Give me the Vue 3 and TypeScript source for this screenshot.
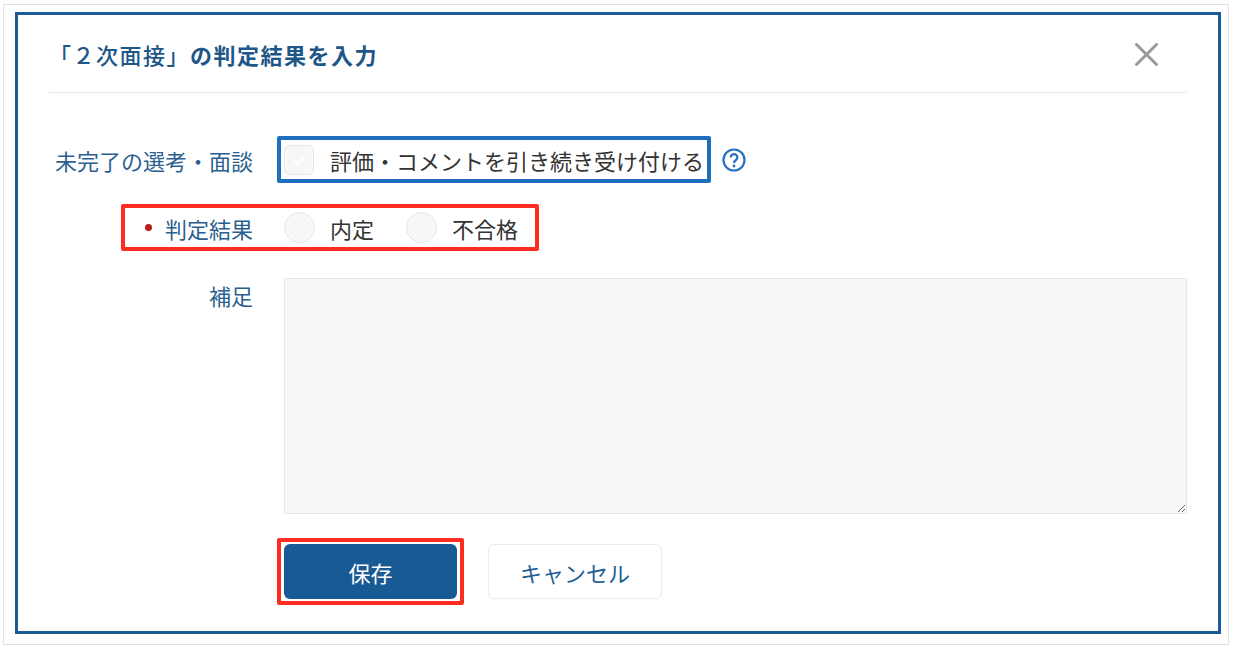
<script setup lang="ts">
const results: string[] = ['内定', '不合格']
</script>

<template>
  <div class="page">
    <div class="dialog">
      <header class="head">
        <h1 class="title"><span class="light">「２次面接」</span>の判定結果を入力</h1>
        <svg class="close" width="23" height="23" viewBox="0 0 23 23" aria-label="閉じる">
          <path d="M1.5 1.5 L21.5 21.5 M21.5 1.5 L1.5 21.5" stroke="#999" stroke-width="3" fill="none" stroke-linecap="round" />
        </svg>
      </header>

      <div class="form">
        <div class="row first">
          <div class="label">未完了の選考・面談</div>
          <div class="mark blue">
            <span class="box">
              <svg width="14" height="12" viewBox="0 0 14 12">
                <path d="M1.5 6.5 L5 10 L12.5 2" stroke="#fff" stroke-width="1.6" fill="none" />
              </svg>
            </span>
            <span class="text">評価・コメントを引き続き受け付ける</span>
          </div>
          <svg class="help" width="24" height="24" viewBox="0 0 24 24">
            <circle cx="12" cy="12" r="10.5" stroke="#2272bd" stroke-width="2.2" fill="none" />
            <path d="M8.6 9.4 a3.4 3.2 0 1 1 5.4 2.6 c-1.3 .9 -2 1.5 -2 3" stroke="#2272bd" stroke-width="2.2" fill="none" />
            <circle cx="12" cy="18" r="1.4" fill="#2272bd" />
          </svg>
        </div>

        <div class="row second">
          <div class="mark red result">
            <i class="dot"></i>
            <span class="label-inline">判定結果</span>
            <div class="radios">
              <label v-for="r in results" :key="r" class="radio-item">
                <span class="radio"></span>
                <span class="text">{{ r }}</span>
              </label>
            </div>
          </div>
        </div>

        <div class="row third">
          <div class="label note">補足</div>
          <textarea class="area"></textarea>
        </div>

        <div class="row actions">
          <div class="mark red save-mark">
            <button class="btn primary" type="button">保存</button>
          </div>
          <button class="btn ghost" type="button">キャンセル</button>
        </div>
      </div>
    </div>
  </div>
</template>

<style>
html, body { margin: 0; background: #fff; }
</style>

<style scoped>
.page {
  box-sizing: border-box;
  width: 1226px;
  height: 641px;
  margin: 4px 0 0 3px;
  padding: 7px 7px 10px 11px;
  border: 1px solid #e2e2e2;
  font-family: "Noto Sans CJK JP", "Noto Sans", sans-serif;
  font-size: 22px;
  color: #333;
}
.dialog {
  box-sizing: border-box;
  width: 1206px;
  height: 622px;
  border: 3px solid #1a5b95;
  padding: 0 31px;
  background: #fff;
}
.head {
  display: flex;
  align-items: center;
  justify-content: space-between;
  height: 77px;
  border-bottom: 1px solid #e6e6e6;
  padding-right: 29px;
}
.title {
  margin: 0;
  font-size: 22px;
  line-height: 30px;
  font-weight: 700;
  letter-spacing: 1.5px;
  color: #1d5687;
}
.light { font-weight: 500; }
.close { margin-top: 2px; }
.row { display: flex; }
.first { margin-top: 43px; align-items: center; height: 47px; }
.second { margin-top: 21px; }
.third { margin-top: 27px; }
.actions { margin-top: 24px; align-items: center; }
.label {
  width: 204px;
  text-align: right;
  color: #2a5f8f;
  line-height: 30px;
}
.mark {
  box-sizing: border-box;
  display: flex;
  align-items: center;
  height: 47px;
  padding: 0 3px;
  border-width: 4px;
  border-style: solid;
  border-radius: 2px;
}
.blue { border-color: #1f6fbf; margin-left: 24px; }
.red { border-color: #ff2d20; }
.box {
  box-sizing: border-box;
  display: flex;
  align-items: center;
  justify-content: center;
  width: 30px;
  height: 30px;
  border: 1px solid #e6e6e6;
  border-radius: 5px;
  background: #f7f7f7;
}
.text { margin-left: 16px; line-height: 30px; white-space: nowrap; }
.help { margin-left: 11px; }
.result { margin-left: 72px; padding: 0 17px 0 20px; }
.dot {
  width: 7px;
  height: 7px;
  border-radius: 50%;
  background: #b81c1c;
  margin-right: 13px;
}
.label-inline { color: #2a5f8f; line-height: 30px; }
.radios { display: flex; gap: 32px; margin-left: 31px; }
.radio-item { display: flex; align-items: center; }
.radio {
  box-sizing: border-box;
  width: 31px;
  height: 31px;
  border: 1px solid #e6e6e6;
  border-radius: 50%;
  background: #f7f7f7;
}
.radio-item .text { margin-left: 15px; }
.note { margin-top: 2px; }
.area {
  box-sizing: border-box;
  display: block;
  width: 903px;
  height: 236px;
  margin: 0 0 0 31px;
  border: 1px solid #e6e6e6;
  background: #f7f7f7;
  resize: both;
  outline: none;
}
.save-mark { height: 67px; margin-left: 228px; }
.btn {
  box-sizing: border-box;
  width: 173px;
  height: 55px;
  border-radius: 6px;
  font: inherit;
  cursor: pointer;
}
.primary { background: #175a94; border: none; color: #fff; }
.ghost {
  width: 174px;
  margin-left: 24px;
  background: #fff;
  border: 1px solid #e8ecf0;
  color: #1f5f96;
}
</style>
